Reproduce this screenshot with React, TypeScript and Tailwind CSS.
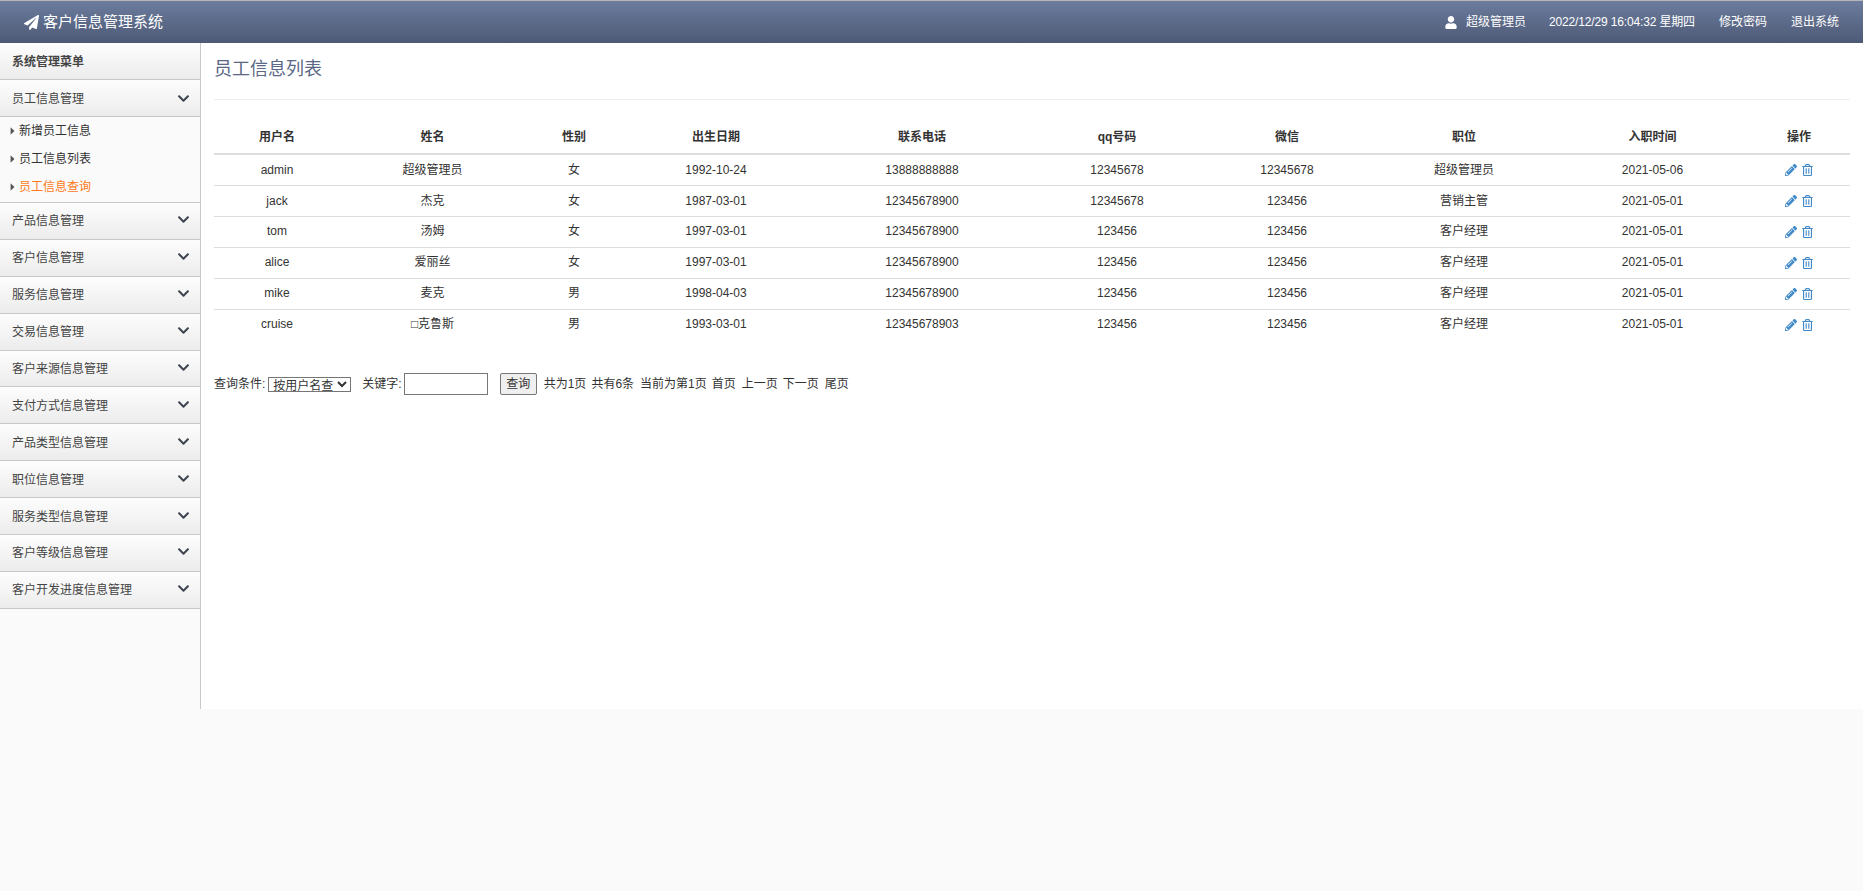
import React from 'react';
import { FaPaperPlane, FaUser, FaChevronDown, FaPencilAlt, FaRegTrashAlt } from 'react-icons/fa';
import { GoTriangleRight } from 'react-icons/go';

const menus = ['产品信息管理', '客户信息管理', '服务信息管理', '交易信息管理', '客户来源信息管理', '支付方式信息管理', '产品类型信息管理', '职位信息管理', '服务类型信息管理', '客户等级信息管理', '客户开发进度信息管理'];

const columns = ['用户名', '姓名', '性别', '出生日期', '联系电话', 'qq号码', '微信', '职位', '入职时间', '操作'];

const rows = [
  ['admin', '超级管理员', '女', '1992-10-24', '13888888888', '12345678', '12345678', '超级管理员', '2021-05-06'],
  ['jack', '杰克', '女', '1987-03-01', '12345678900', '12345678', '123456', '营销主管', '2021-05-01'],
  ['tom', '汤姆', '女', '1997-03-01', '12345678900', '123456', '123456', '客户经理', '2021-05-01'],
  ['alice', '爱丽丝', '女', '1997-03-01', '12345678900', '123456', '123456', '客户经理', '2021-05-01'],
  ['mike', '麦克', '男', '1998-04-03', '12345678900', '123456', '123456', '客户经理', '2021-05-01'],
  ['cruise', '□克鲁斯', '男', '1993-03-01', '12345678903', '123456', '123456', '客户经理', '2021-05-01'],
];

function MenuTitle({ label, first }: { label: string; first?: boolean }) {
  return (
    <div className={`flex items-center justify-between border-b border-[#c8c8c8] bg-gradient-to-b from-[#fdfdfd] to-[#ececec] pl-3 pr-[10px] text-[#444] ${first ? 'h-[37px]' : 'h-[36.9px]'}`}>
      <span className={first ? 'pt-[2px]' : 'pt-px'}>{label}</span>
      <FaChevronDown className={`h-[13px] w-[13px] text-[#3f4650] ${first ? '' : '-mt-[2px]'}`} />
    </div>
  );
}

function SubLink({ label, active }: { label: string; active?: boolean }) {
  return (
    <div className="flex h-[28px] items-center pl-[10px]">
      <GoTriangleRight className="-ml-[4px] h-[14px] w-[13px] text-[#555]" />
      <span className={active ? 'text-[#ff7a1a]' : 'text-[#333]'}>{label}</span>
    </div>
  );
}

export default function App() {
  return (
    <div className="min-h-[891px] bg-[#fafafa] font-['Liberation_Sans','Noto_Sans_CJK_SC',sans-serif] text-[12px] text-[#333]">
      <header className="flex h-[43px] items-center justify-between border-t border-[#b5b5b5] bg-gradient-to-b from-[#6d7c9e] to-[#4d5a76] pl-6 pr-[24px] text-white">
        <div className="flex items-center gap-[4px] text-[15px]">
          <FaPaperPlane className="h-[15px] w-[15px]" />
          <span>客户信息管理系统</span>
        </div>
        <div className="flex items-center">
          <FaUser className="mr-[8px] h-[13px] w-[14px]" />
          <span className="mr-[23px]">超级管理员</span>
          <span className="mr-[24px] tracking-[-0.15px]">2022/12/29 16:04:32 星期四</span>
          <span className="mr-[24px]">修改密码</span>
          <span>退出系统</span>
        </div>
      </header>

      <div className="flex h-[666px]">
        <aside className="w-[201px] shrink-0 border-r border-[#c8c8c8] bg-[#fafafa]">
          <div className="flex h-[37px] items-center border-b border-[#c8c8c8] bg-gradient-to-b from-[#fdfdfd] to-[#ececec] pl-3 font-bold text-[#444]">
            <span className="pt-[2px]">系统管理菜单</span>
          </div>
          <MenuTitle label="员工信息管理" first />
          <div className="border-b border-[#c8c8c8] pb-px">
            <SubLink label="新增员工信息" />
            <SubLink label="员工信息列表" />
            <SubLink label="员工信息查询" active />
          </div>
          {menus.map((m) => (
            <MenuTitle key={m} label={m} />
          ))}
        </aside>

        <main className="flex-1 bg-white pl-[13px] pr-[13px]">
          <div className="h-[57px] border-b border-[#eee] pt-[13px] text-[18px] leading-[26px] text-[#5a6885]">员工信息列表</div>

          <table className="mt-[19px] w-[1636px] table-fixed border-collapse text-center">
            <colgroup>
              <col className="w-[126px]" />
              <col className="w-[185px]" />
              <col className="w-[98px]" />
              <col className="w-[186px]" />
              <col className="w-[226px]" />
              <col className="w-[164px]" />
              <col className="w-[176px]" />
              <col className="w-[178px]" />
              <col className="w-[199px]" />
              <col className="w-[98px]" />
            </colgroup>
            <thead>
              <tr className="h-[35px] border-b-2 border-[#ddd]">
                {columns.map((c) => (
                  <th key={c} className="pt-[2px] font-bold text-[#333] last:pr-1">{c}</th>
                ))}
              </tr>
            </thead>
            <tbody>
              {rows.map((r, ri) => (
                <tr key={r[0]} className="h-[31px] border-b border-[#ddd] last:border-b-0">
                  {r.map((v, i) => (
                    <td key={i} className={ri < 2 ? 'pt-px' : 'pb-px'}>{v}</td>
                  ))}
                  <td className="pr-1">
                    <span className="flex items-center justify-center gap-[5px] pt-px text-[#428bca]">
                      <FaPencilAlt className="h-[12px] w-[12px]" />
                      <FaRegTrashAlt className="h-[12px] w-[11px]" />
                    </span>
                  </td>
                </tr>
              ))}
            </tbody>
          </table>

          <div className="mt-[33px] flex h-[22px] items-center">
            <span>查询条件:</span>
            <select className="ml-[3px] h-[15px] w-[83px] border border-[#767676] bg-white text-[12px] leading-none">
              <option>按用户名查询</option>
            </select>
            <span className="ml-[11px]">关键字:</span>
            <input className="ml-[2px] h-[22px] w-[84px] border border-[#767676] bg-white" readOnly />
            <button className="ml-[12px] h-[22px] w-[37px] rounded-[2px] border border-[#767676] bg-[#efefef]">查询</button>
            <span className="ml-[7px]">共为1页</span>
            <span className="ml-[5px]">共有6条</span>
            <span className="ml-[6px]">当前为第1页</span>
            <span className="ml-[5px]">首页</span>
            <span className="ml-[6px]">上一页</span>
            <span className="ml-[5px]">下一页</span>
            <span className="ml-[6px]">尾页</span>
          </div>
        </main>
      </div>
    </div>
  );
}
